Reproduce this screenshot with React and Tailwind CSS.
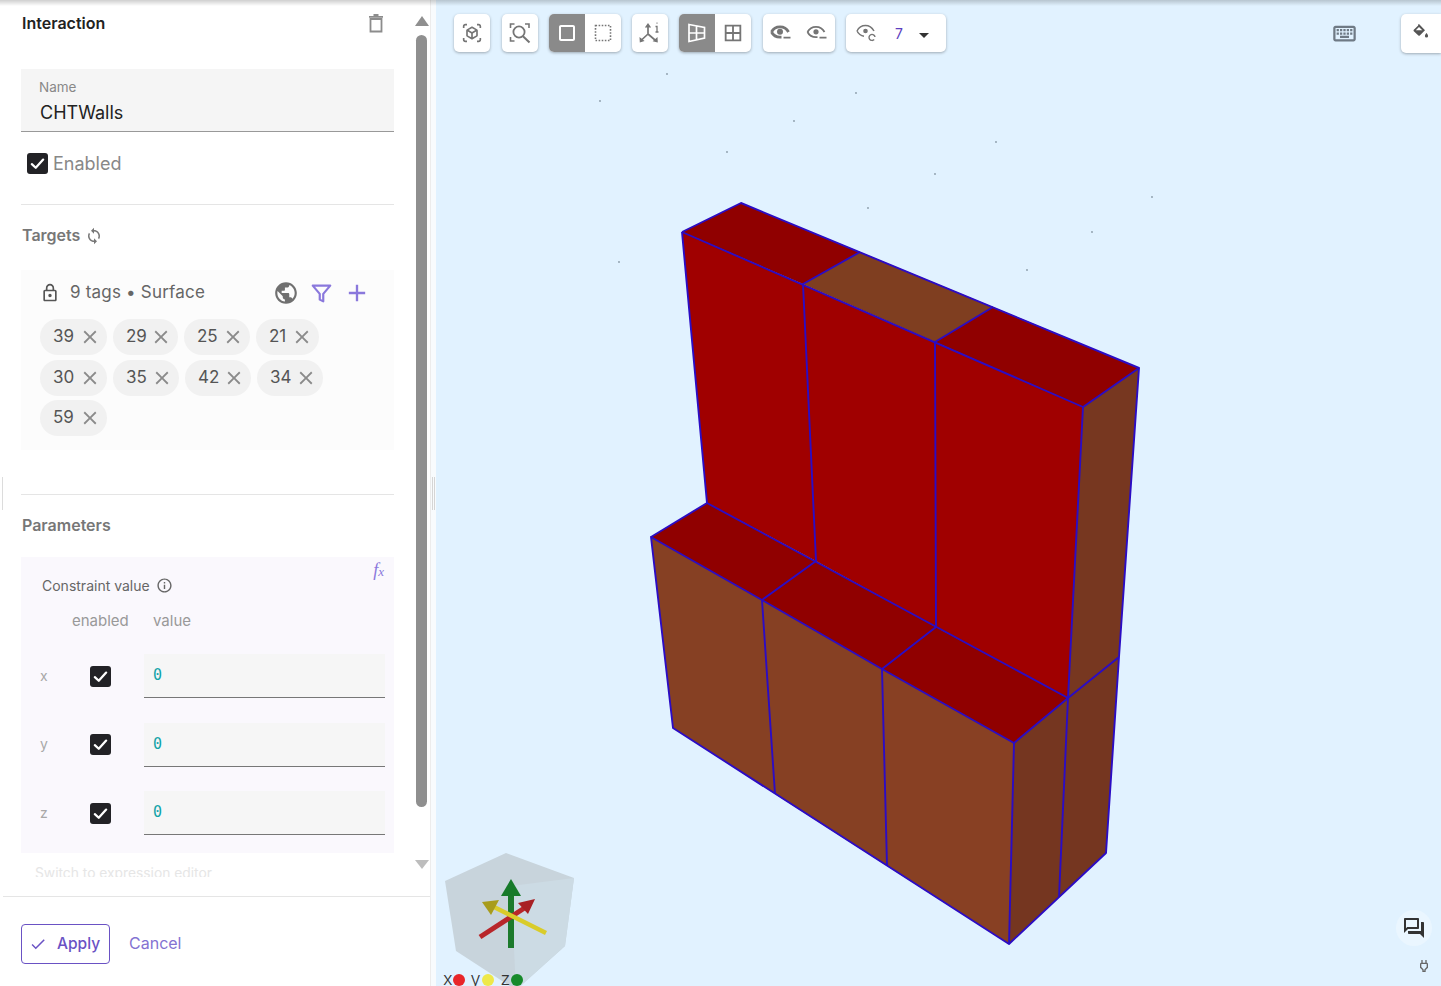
import React from "react";
import {
  MdOutlineViewInAr, MdCropSquare, MdOutlineLock, MdPublic, MdAdd, MdClose, MdInfoOutline,
  MdSync, MdCheck, MdOutlineForum, MdOutlinePower, MdOutlineKeyboard, MdBorderAll, MdArrowDropDown,
} from "react-icons/md";
import { FiFilter } from "react-icons/fi";

const FONT = "font-['Inter','Noto_Sans',sans-serif]";

function Check({ className }) {
  return (
    <span className={`flex items-center justify-center w-[21px] h-[21px] rounded-[3px] bg-[#222226] shrink-0 ${className || ""}`}>
      <svg width="17" height="17" viewBox="0 0 24 24" fill="none" stroke="#fff" strokeWidth="3.2" strokeLinecap="round" strokeLinejoin="round">
        <path d="M4 13l5.5 5L20 6.5" />
      </svg>
    </span>
  );
}

function Chip({ n, w }) {
  return (
    <div style={{ width: w }} className="h-[36px] rounded-full bg-[#f1f1f1] flex items-center justify-between pl-[13px] pr-[6px] text-[17px] text-[#555]">
      <span>{n}</span>
      <MdClose size={22} className="text-[#8a8a8a] -mt-px" />
    </div>
  );
}

function AxisRow({ label }) {
  return (
    <div className="flex items-center h-[44px] mb-[24.5px] relative">
      <span className="w-[19px] ml-[19px] -mt-[2px] text-[14px] text-[#a8a8a8]">{label}</span>
      <div className="w-[21px] ml-[31px] mr-[33px]">
        <Check />
      </div>
      <div className="w-[241px] h-[44px] bg-[#f6f6f6] border-b border-[#777] flex items-center pl-[9px] font-['DejaVu_Sans_Mono','Liberation_Mono',monospace] text-[15px] text-[#11a3a8]">
        0
      </div>
    </div>
  );
}

function Btn({ active, children }) {
  return (
    <div className={`w-[36px] h-[38px] flex items-center justify-center ${active ? "bg-[#8a8a8a]" : ""}`}>{children}</div>
  );
}

function Group({ children, className }) {
  return (
    <div className={`flex h-[38px] bg-white rounded-[5px] overflow-hidden shadow-[0_1px_3px_rgba(0,0,0,0.3)] shrink-0 ${className || ""}`}>
      {children}
    </div>
  );
}

const G = "#757575";

function ZoomCorners() {
  return (
    <svg width="22" height="22" viewBox="0 0 22 22" fill="none" stroke={G} strokeWidth="1.6">
      <path d="M1.5 6V2h4M16 2h4v4M1.5 15v4h4" />
      <circle cx="10" cy="10" r="5.6" strokeWidth="1.8" />
      <path d="M14 14.2l6.5 6.3" strokeWidth="2" />
    </svg>
  );
}
function DottedSquare() {
  return (
    <svg width="18" height="18" viewBox="0 0 18 18" fill="none" stroke="#757575" strokeWidth="1.6" strokeDasharray="1.6 1.5">
      <rect x="1.5" y="1.5" width="15" height="15" />
    </svg>
  );
}
function Axes() {
  return (
    <svg width="22" height="22" viewBox="0 0 22 22" fill="none" stroke={G} strokeWidth="1.7">
      <path d="M9 12V3M9 12l-6.5 6M9 12l7 6" />
      <path d="M5.8 5.5L9 1 12.2 5.5zM.5 15l.3 5.5 4.8-1.5zM18.5 15l.3 5.5-5.2-1.3z" fill={G} stroke="none" />
      <path d="M16.5 4.5h1.5V10M16.5 10h3M17.5 1.2h1" strokeWidth="1.3" />
    </svg>
  );
}
function Perspective() {
  return (
    <svg width="20" height="20" viewBox="0 0 20 20" fill="none" stroke="#fff" strokeWidth="1.7">
      <path d="M2 1.5l15.5 3v10.5L2 18.5zM9.5 3v14M2 10h15.5" />
    </svg>
  );
}
function EyeMinus({ filled }) {
  return (
    <svg width="22" height="18" viewBox="0 0 22 18" fill="none" stroke={G} strokeWidth={filled ? 2.8 : 1.8}>
      <path d="M1.5 8C3.3 4.5 6.3 2.8 10 2.8S16.7 4.5 18.5 8" />
      <path d="M1.5 8C3.3 11.5 6.3 13.2 10 13.2h1.5" />
      <circle cx="10" cy="7.8" r={filled ? 3 : 2.6} fill={G} stroke="none" />
      <path d="M13.5 13.6h7" strokeWidth="1.8" />
    </svg>
  );
}
function EyeCycle() {
  return (
    <svg width="22" height="20" viewBox="0 0 22 20" fill="none" stroke={G} strokeWidth="1.5">
      <path d="M1 8c1.8-3.6 5-5.5 8.5-5.5S16 4.4 18 8M1 8c1.5 3 4 4.8 7 5.3" />
      <circle cx="9.5" cy="8" r="2.3" fill={G} stroke="none" />
      <path d="M19 14a3 3 0 1 0-.8 2.5" strokeWidth="1.4" />
    </svg>
  );
}
function Trash() {
  return (
    <svg width="16" height="19" viewBox="0 0 16 19" fill="none" stroke="#8c8c8c" strokeWidth="1.8">
      <path d="M2.5 5v12.5h11V5z" />
      <path d="M1 2.8h14M5.5 1h5" />
    </svg>
  );
}
function Bucket() {
  return (
    <svg width="16" height="16" viewBox="0 0 16 16">
      <path d="M5 .8L6 0l6 6.2-5.2 5.3a1 1 0 0 1-1.4 0L.8 7.2a1 1 0 0 1 0-1.4L5.2 1.5z" fill="#555" />
      <path d="M6 3L2.8 6.3h6.5z" fill="#fff" />
      <path d="M13.5 9s-1.6 1.8-1.6 3a1.6 1.6 0 0 0 3.2 0c0-1.2-1.6-3-1.6-3z" fill="#555" />
    </svg>
  );
}
function PlugIcon() {
  return <MdOutlinePower size={16} className="text-[#666]" />;
}

const faces = [
  ["741,203 682,232 803,284 860,252", "#900000"],
  ["860,252 803,284 935,342 993,307", "#7f3e20"],
  ["993,307 935,342 1083,407 1139,368", "#900000"],
  ["682,232 803,284 816,561 707,503", "#a00000"],
  ["803,284 935,342 936,627 816,561", "#a00000"],
  ["935,342 1083,407 1068,698 936,627", "#a00000"],
  ["1139,368 1083,407 1068,698 1119,657", "#773720"],
  ["707,503 651,537 762,600 816,561", "#900000"],
  ["816,561 762,600 882,669 936,627", "#900000"],
  ["936,627 882,669 1014,743 1068,698", "#900000"],
  ["651,537 762,600 775,794 673,728", "#864023"],
  ["762,600 882,669 887,866 775,794", "#864023"],
  ["882,669 1014,743 1009,944 887,866", "#884023"],
  ["1014,743 1068,698 1059,897 1009,944", "#753620"],
  ["1068,698 1119,657 1106,853 1059,897", "#753620"],
];
const lines = [
  "682,232 741,203 1139,368 1119,657 1106,853 1009,944 673,728 651,537 762,600 882,669 1014,743 1068,698 1119,657",
  "682,232 1083,407 1139,368",
  "682,232 707,503 1068,698",
  "651,537 707,503",
  "860,252 803,284 816,561 762,600 775,794",
  "993,307 935,342 936,627 882,669 887,866",
  "1083,407 1068,698 1059,897",
  "1014,743 1009,944",
];
const dots = [[600,101],[667,74],[856,93],[794,121],[727,152],[996,142],[935,174],[868,208],[1152,197],[1092,232],[1027,270],[619,262]];

export default function App() {
  return (
    <div className={`relative flex w-[1441px] h-[986px] overflow-hidden bg-[#e1f2ff] ${FONT}`}>
      {/* left panel */}
      <aside className="relative w-[436px] h-full flex shrink-0 bg-[#f8fbfd]">
        <div className="w-[431px] h-full bg-white border-r border-[#ececec] flex flex-col">
          <div className="h-[896px] flex overflow-hidden">
            <div className="w-[416px] h-[877px] overflow-hidden pl-[21px] pr-[22px]">
              <div className="flex justify-between items-center pt-[14px] h-[69px] pb-[38px]">
                <span className="text-[16px] font-semibold text-[#222] pl-px">Interaction</span>
                <span className="mr-[10px] mt-[2px]"><Trash /></span>
              </div>
              <div className="h-[63px] bg-[#f5f5f5] border-b border-[#999] pl-[18px] pt-[10px]">
                <div className="text-[13.5px] leading-[16px] text-[#888]">Name</div>
                <div className="text-[18px] leading-[26px] mt-[5px] text-[#222] pl-px">CHTWalls</div>
              </div>
              <div className="flex items-center pl-[6px] mt-[21px] h-[21px] gap-[5px]">
                <Check />
                <span className="text-[18px] text-[#888]">Enabled</span>
              </div>
              <div className="mt-[30px] border-t border-[#e5e5e5]" />
              <div className="flex items-center mt-[20px] h-[20px] text-[16px] font-semibold text-[#777] pl-px gap-[5px]">
                Targets <MdSync size={18} className="text-[#777] mt-[2px]" />
              </div>
              <div className="mt-[25px] h-[180px] bg-[#fcfcfc] pl-[19px]">
                <div className="flex items-center h-[45px] pt-[1px] text-[17px] text-[#666] tracking-[0.2px]">
                  <MdOutlineLock size={20} className="text-[#555] mr-[10px]" />
                  <span className="w-[203px] -mt-px">9 tags • Surface</span>
                  <MdPublic size={26} className="text-[#707070]" />
                  <FiFilter size={21} strokeWidth={2.5} className="text-[#8a78dc] ml-[12px]" />
                  <MdAdd size={28} className="text-[#8a78dc] ml-[11px]" />
                </div>
                <div className="flex flex-col gap-[5px] mt-[4px]">
                  <div className="flex gap-[6px]">
                    <Chip n="39" w={67} /><Chip n="29" w={65} /><Chip n="25" w={66} /><Chip n="21" w={63} />
                  </div>
                  <div className="flex gap-[6px]">
                    <Chip n="30" w={67} /><Chip n="35" w={66} /><Chip n="42" w={66} /><Chip n="34" w={66} />
                  </div>
                  <div className="flex gap-[6px] -mt-px">
                    <Chip n="59" w={67} />
                  </div>
                </div>
              </div>
              <div className="mt-[44px] border-t border-[#e5e5e5]" />
              <div className="mt-[20px] h-[20px] flex items-center text-[16px] font-semibold text-[#777] pl-px">Parameters</div>
              <div className="relative mt-[22px] h-[296px] bg-[#faf8fd]">
                <span className="absolute right-[10px] top-0 font-['Liberation_Serif',serif] italic text-[18px] text-[#8a78dc]">
                  f<span className="text-[13px]">x</span>
                </span>
                <div className="flex items-center pl-[21px] pt-[18px] text-[14px] text-[#666] gap-[6px]">
                  Constraint value <MdInfoOutline size={17} />
                </div>
                <div className="flex pl-[51px] mt-[16px] h-[18px] items-center text-[15px] text-[#999]">
                  <span className="w-[81px]">enabled</span>
                  <span>value</span>
                </div>
                <div className="mt-[24px]">
                  <AxisRow label="x" />
                  <AxisRow label="y" />
                  <AxisRow label="z" />
                </div>
              </div>
              <div className="pl-[14px] mt-[12px] text-[13.8px] leading-[16px] text-[#e6e6e6]">Switch to expression editor</div>
            </div>
            <div className="w-[13px] ml-[-1px] flex flex-col items-center pt-[16px]">
              <span className="w-0 h-0 border-x-[7px] border-x-transparent border-b-[10px] border-b-[#8f8f8f]" />
              <span className="w-[11px] h-[772px] mt-[9px] rounded-full bg-[#8f8f8f]" />
              <span className="w-0 h-0 mt-[53px] border-x-[7px] border-x-transparent border-t-[9px] border-t-[#bdbdbd]" />
            </div>
          </div>
          <div className="flex-1 border-t border-[#e5e5e5] ml-[3px] pl-[18px] pt-[27px]">
            <div className="flex items-center">
              <button className="w-[89px] h-[40px] border border-[#6a52c4] rounded-[4px] flex items-center pl-[7px] text-[15.5px] font-medium text-[#6a52c4]">
                <MdCheck size={18} className="mr-[10px]" />
                <span className="-mt-px">Apply</span>
              </button>
              <span className="ml-[19px] -mt-[2px] text-[16px] text-[#8472d2]">Cancel</span>
            </div>
          </div>
        </div>
        <span className="absolute left-[2px] top-[477px] h-[33px] border-l border-[#dcdcdc]" />
        <span className="absolute left-[432px] top-[477px] h-[33px] w-[3px] border-x border-[#d5d5d5]" />
      </aside>

      {/* viewport */}
      <main className="relative flex-1 h-full">
        <svg className="absolute inset-0 w-full h-full" viewBox="436 0 1005 986">
          {dots.map(([x, y]) => (
            <circle key={x} cx={x} cy={y} r="0.9" fill="#8a9aa8" />
          ))}
          {faces.map(([p, c]) => (
            <polygon key={p} points={p} fill={c} />
          ))}
          {lines.map((p) => (
            <polyline key={p} points={p} fill="none" stroke="#2b0cc4" strokeWidth="1.9" strokeLinejoin="round" />
          ))}
        </svg>

        <div className="absolute top-[14px] left-[18px] right-0 flex items-start gap-[11px]">
          <Group><Btn><MdOutlineViewInAr size={20} color={G} /></Btn></Group>
          <Group className="ml-px"><Btn><ZoomCorners /></Btn></Group>
          <Group><Btn active><MdCropSquare size={24} color="#fff" /></Btn><Btn><DottedSquare /></Btn></Group>
          <Group><Btn><Axes /></Btn></Group>
          <Group><Btn active><Perspective /></Btn><Btn><MdBorderAll size={22} color={G} /></Btn></Group>
          <Group className="ml-px"><Btn><EyeMinus filled /></Btn><Btn><EyeMinus /></Btn></Group>
          <Group>
            <div className="w-[100px] flex items-center pl-[10px]">
              <EyeCycle />
              <span className="ml-[17px] text-[14px] text-[#5d3fc0]">7</span>
              <MdArrowDropDown size={24} className="text-[#333] ml-[9px] mt-[3px]" />
            </div>
          </Group>
          <div className="ml-auto mr-[83px] mt-[6px]">
            <MdOutlineKeyboard size={27} color="#6f7a85" />
          </div>
          <div className="absolute right-0 top-0 w-[40px] h-[39px] bg-white rounded-l-[5px] shadow-[0_1px_3px_rgba(0,0,0,0.3)] flex items-center justify-center pb-[4px]">
            <Bucket />
          </div>
        </div>

        {/* orientation gizmo */}
        <svg className="absolute left-0 bottom-0" width="150" height="140" viewBox="436 846 150 140">
          <polygon points="506,853 574,878 565,946 516,990 456,951 445,881" fill="#c8d4dc" />
          <polygon points="511,886 574,878 565,946 516,990" fill="#ccdbe4" />
          <path d="M511 948V890" stroke="#1c7a2c" strokeWidth="6" />
          <polygon points="511,879 501,896 521,896" fill="#177a2a" />
          <path d="M480 937L526 907" stroke="#b8262a" strokeWidth="5" />
          <polygon points="535,899 518,903 528,914" fill="#a82024" />
          <path d="M546 933L494 907" stroke="#d9cc2a" strokeWidth="4.5" />
          <polygon points="482,902 499,900 491,915" fill="#a89c1c" />
        </svg>
        <div className="absolute left-[7px] top-[972px] flex items-center h-[14px] leading-[14px] text-[18px] font-light text-[#333]">
          <span>x</span><span className="w-[12px] h-[12px] mt-[1px] rounded-full bg-[#e8262a]" />
          <span className="ml-[6px]">y</span><span className="ml-[1px] w-[12px] h-[12px] mt-[1px] rounded-full bg-[#eee84a]" />
          <span className="ml-[7px]">z</span><span className="ml-[1px] w-[12px] h-[12px] mt-[1px] rounded-full bg-[#178a2a]" />
        </div>

        <div className="absolute right-[9px] top-[910px] w-[36px] h-[36px] rounded-full bg-[#eaf6ff] flex items-center justify-center">
          <MdOutlineForum size={24} color="#333" />
        </div>
        <div className="absolute right-[9px] top-[958px]"><PlugIcon /></div>
      </main>

      <div className="absolute top-0 left-0 right-0 h-[6px] bg-linear-to-b from-[#00000030] to-transparent pointer-events-none" />
    </div>
  );
}
